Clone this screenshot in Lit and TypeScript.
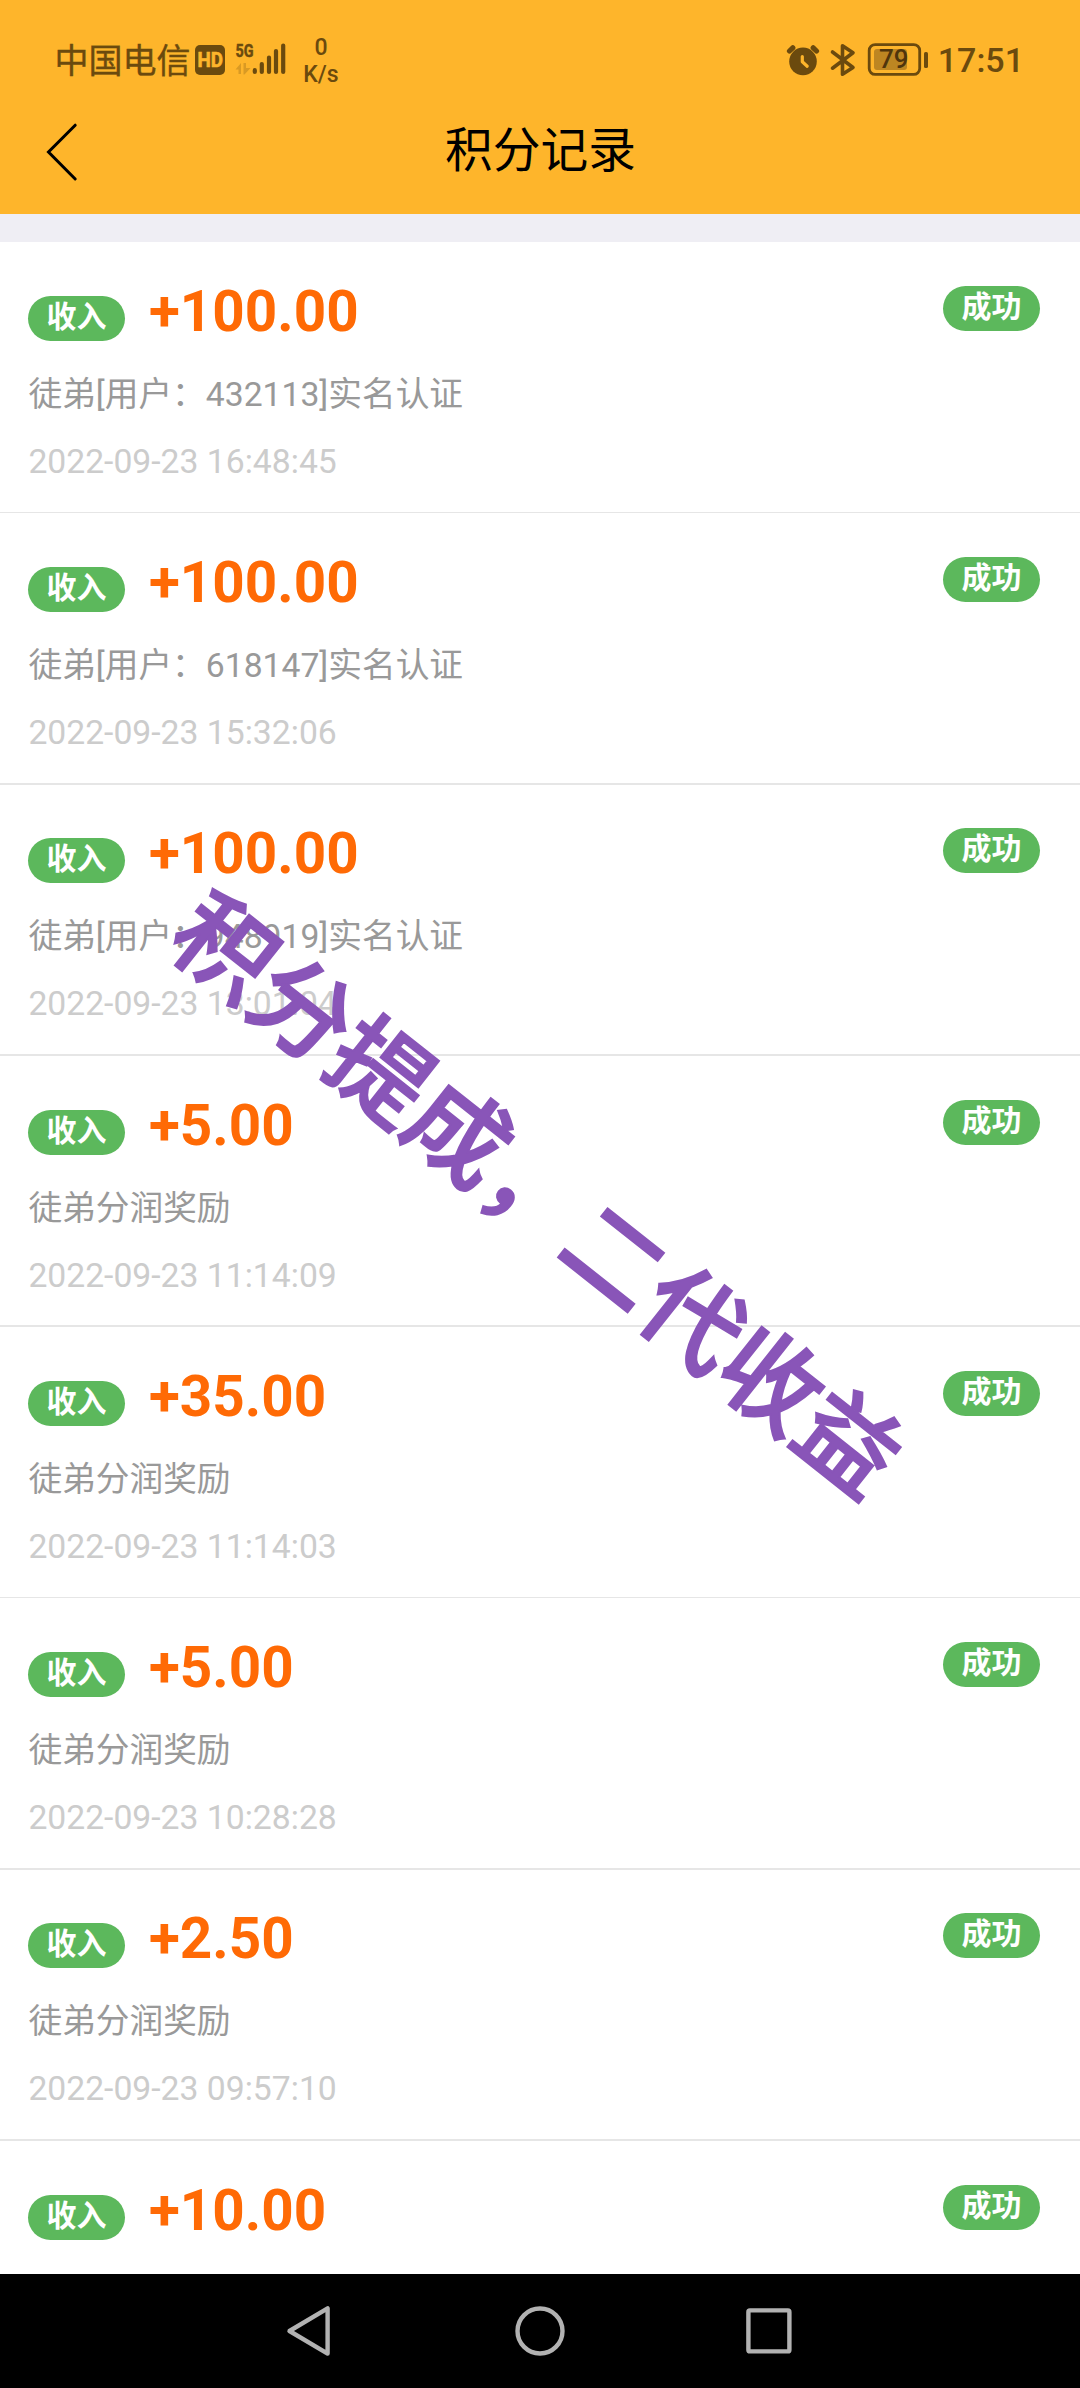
import { LitElement, html, css, nothing } from "lit";
import { customElement, property } from "lit/decorators.js";

interface PointRecord {
  amount: string;
  note?: string;
  time?: string;
}

const RECORDS: PointRecord[] = [
  { amount: "+100.00", note: "徒弟[用户：432113]实名认证", time: "2022-09-23 16:48:45" },
  { amount: "+100.00", note: "徒弟[用户：618147]实名认证", time: "2022-09-23 15:32:06" },
  { amount: "+100.00", note: "徒弟[用户：948919]实名认证", time: "2022-09-23 13:01:04" },
  { amount: "+5.00", note: "徒弟分润奖励", time: "2022-09-23 11:14:09" },
  { amount: "+35.00", note: "徒弟分润奖励", time: "2022-09-23 11:14:03" },
  { amount: "+5.00", note: "徒弟分润奖励", time: "2022-09-23 10:28:28" },
  { amount: "+2.50", note: "徒弟分润奖励", time: "2022-09-23 09:57:10" },
  { amount: "+10.00" },
];

@customElement("status-bar")
export class StatusBar extends LitElement {
  static styles = css`
    :host {
      display: flex;
      justify-content: space-between;
      height: 120px;
      padding: 0 56px 0 54.5px;
      box-sizing: border-box;
      color: #6b4a0e;
      font-family: Roboto, "Noto Sans CJK SC", sans-serif;
    }
    .side {
      display: flex;
      align-items: center;
      height: 120px;
    }
    .carrier {
      font-size: 34px;
      line-height: 40px;
      width: 140.5px;
      padding-top: 2px;
      white-space: nowrap;
      -webkit-text-stroke: 0.4px #6b4a0e;
    }
    .speed {
      display: flex;
      flex-direction: column;
      align-items: center;
      width: 40px;
      margin-left: 11px;
      padding-top: 1px;
      font-size: 23px;
      line-height: 27px;
      font-weight: 500;
    }
    .clock {
      margin-left: 9px;
      font-size: 34px;
      line-height: 40px;
      font-weight: 500;
      white-space: nowrap;
    }
    svg {
      display: block;
      flex: none;
    }
    .hd-text {
      font: 700 20px Roboto, sans-serif;
      stroke: #feb52b;
      stroke-width: 0.6px;
    }
    .net-text {
      font: 700 19px Roboto, sans-serif;
      stroke: #6b4a0e;
      stroke-width: 0.5px;
    }
    .bat-text { font: 500 25px Roboto, sans-serif; }
  `;

  render() {
    return html`
      <div class="side">
        <span class="carrier">中国电信</span>
        <svg width="95" height="120" viewBox="195 0 95 120">
          <rect x="195" y="45" width="30" height="30" rx="5" fill="#6b4a0e" />
          <text class="hd-text" x="197.5" y="67" textLength="25.5" lengthAdjust="spacingAndGlyphs" fill="#feb52b">HD</text>
          <text class="net-text" x="235.5" y="57" textLength="18" lengthAdjust="spacingAndGlyphs" fill="#6b4a0e">5G</text>
          <path d="M235.5 69.5 L241 63 V74 H238.5 V69.5Z M243.5 63 H246 V68 H250.5 L244.5 74.5 H243.5Z" fill="#d99a24" />
          <g stroke="#6b4a0e" stroke-width="4.2" stroke-linecap="round">
            <path d="M254.8 70.2V72M261.8 64V72M269 57.5V72M276 51V72M283.2 45.5V72" />
          </g>
        </svg>
        <div class="speed"><span>0</span><span>K/s</span></div>
      </div>
      <div class="side">
        <svg width="143" height="120" viewBox="786 0 143 120">
          <circle cx="803" cy="61.4" r="13.8" fill="#6b4a0e" />
          <path d="M789.5 51L792.8 47.8M816.5 51L813.2 47.8" stroke="#6b4a0e" stroke-width="5.2" stroke-linecap="round" />
          <path d="M802.3 56.5V61.8L807.2 66.2" fill="none" stroke="#feb52b" stroke-width="3.2" stroke-linecap="round" stroke-linejoin="round" />
          <path d="M832.5 52L853 67.5L842.5 74.2V45.8L853 52.7L832.5 68.2" fill="none" stroke="#6b4a0e" stroke-width="3.6" stroke-linecap="round" stroke-linejoin="round" />
          <rect x="869.2" y="44.6" width="50.5" height="29.8" rx="6" fill="none" stroke="#6b4a0e" stroke-width="2.8" />
          <rect x="874" y="49" width="33" height="21" rx="3" fill="#bd8622" />
          <rect x="924" y="52" width="4" height="16" rx="1.6" fill="#6b4a0e" />
          <text class="bat-text" x="879" y="68" textLength="29.5" lengthAdjust="spacingAndGlyphs" fill="#4f350c">79</text>
        </svg>
        <span class="clock">17:51</span>
      </div>
    `;
  }
}

@customElement("title-bar")
export class TitleBar extends LitElement {
  static styles = css`
    :host {
      display: grid;
      grid-template-columns: 120px 1fr 119px;
      align-items: center;
      height: 94px;
      color: #000;
      font-family: Roboto, "Noto Sans CJK SC", sans-serif;
    }
    .title {
      text-align: center;
      font-size: 47.7px;
      line-height: 60px;
      padding-bottom: 32px;
    }
    .back { display: block; }
  `;

  render() {
    return html`
      <svg class="back" width="120" height="94" viewBox="0 120 120 94">
        <path d="M75.2 125.2L48.5 152L75.2 179" fill="none" stroke="#000" stroke-width="3" stroke-linecap="round" />
      </svg>
      <div class="title">积分记录</div>
    `;
  }
}

@customElement("record-row")
export class RecordRow extends LitElement {
  @property({ attribute: false }) record!: PointRecord;

  static styles = css`
    :host {
      display: flex;
      justify-content: space-between;
      align-items: flex-start;
      box-sizing: border-box;
      padding: 0 40px 0 28px;
      background: #fff;
      font-family: Roboto, "Noto Sans CJK SC", sans-serif;
    }
    .headline {
      display: flex;
      align-items: flex-start;
    }
    .badge {
      width: 97px;
      height: 45px;
      border-radius: 23px;
      background: #5cb85c;
      color: #fff;
      font-size: 30px;
      line-height: 41px;
      font-weight: 700;
      text-align: center;
    }
    .kind { margin-top: 54px; }
    .state { margin-top: 44px; }
    .amount {
      margin: 36px 0 0 24px;
      font-size: 56.6px;
      line-height: 68px;
      font-weight: 700;
      color: #ff6a05;
    }
    .note, .time {
      padding-left: 0.4px;
      font-size: 33.7px;
      line-height: 40px;
      white-space: nowrap;
    }
    .note {
      margin-top: 29px;
      color: #999;
    }
    .time {
      margin-top: 27px;
      color: #ccc;
    }
  `;

  render() {
    const { amount, note, time } = this.record;
    return html`
      <div>
        <div class="headline">
          <span class="badge kind">收入</span>
          <span class="amount">${amount}</span>
        </div>
        ${note ? html`<div class="note">${note}</div>` : nothing}
        ${time ? html`<div class="time">${time}</div>` : nothing}
      </div>
      <span class="badge state">成功</span>
    `;
  }
}

@customElement("nav-bar")
export class NavBar extends LitElement {
  static styles = css`
    :host {
      display: grid;
      grid-template-columns: repeat(3, 229px);
      justify-content: center;
      justify-items: center;
      height: 114px;
      background: #000;
    }
    svg {
      display: block;
      fill: none;
      stroke: #b2b2b2;
      stroke-width: 4.4;
      stroke-linejoin: round;
    }
  `;

  render() {
    return html`
      <svg width="60" height="114" viewBox="281 2274 60 114"><path d="M289.5 2331L327.6 2308.4V2353.6Z" /></svg>
      <svg width="60" height="114" viewBox="510 2274 60 114"><circle cx="540" cy="2331" r="22.5" /></svg>
      <svg width="60" height="114" viewBox="739 2274 60 114"><rect x="748.4" y="2310.4" width="41" height="41" rx="1.5" /></svg>
    `;
  }
}

@customElement("app-root")
export class AppRoot extends LitElement {
  static styles = css`
    :host {
      display: flex;
      flex-direction: column;
      position: relative;
      width: 1080px;
      height: 2388px;
      overflow: hidden;
      background: #fff;
    }
    .header {
      flex: none;
      height: 214px;
      background: #feb52b;
    }
    .list {
      flex: 1;
      min-height: 0;
      overflow: hidden;
      border-top: 28px solid #efeef4;
    }
    .row {
      height: 271px;
      border-bottom: 2px solid #e6e6e6;
    }
    .row:nth-child(4n + 1) { border-bottom-width: 1px; }
    .row:nth-child(4n + 2) { height: 272px; }
    .row:nth-child(4n + 3) {
      margin-top: -1px;
      height: 272px;
    }
    .row:last-child {
      height: 133px;
      border-bottom: 0;
    }
    .row:nth-child(4n + 2) {
      position: relative;
      z-index: 1;
    }
    .watermark {
      position: absolute;
      z-index: 2;
      left: 541px;
      top: 1190px;
      transform: translate(-50%, -50%) rotate(38.4deg);
      font-family: "Noto Sans CJK SC", sans-serif;
      font-size: 99.5px;
      line-height: 120px;
      font-weight: 500;
      -webkit-text-stroke: 2px #8955b8;
      white-space: nowrap;
      color: #8955b8;
    }
  `;

  render() {
    return html`
      <div class="header">
        <status-bar></status-bar>
        <title-bar></title-bar>
      </div>
      <div class="list">
        ${RECORDS.map((r) => html`<record-row class="row" .record=${r}></record-row>`)}
      </div>
      <nav-bar></nav-bar>
      <div class="watermark">积分提成，二代收益</div>
    `;
  }
}
